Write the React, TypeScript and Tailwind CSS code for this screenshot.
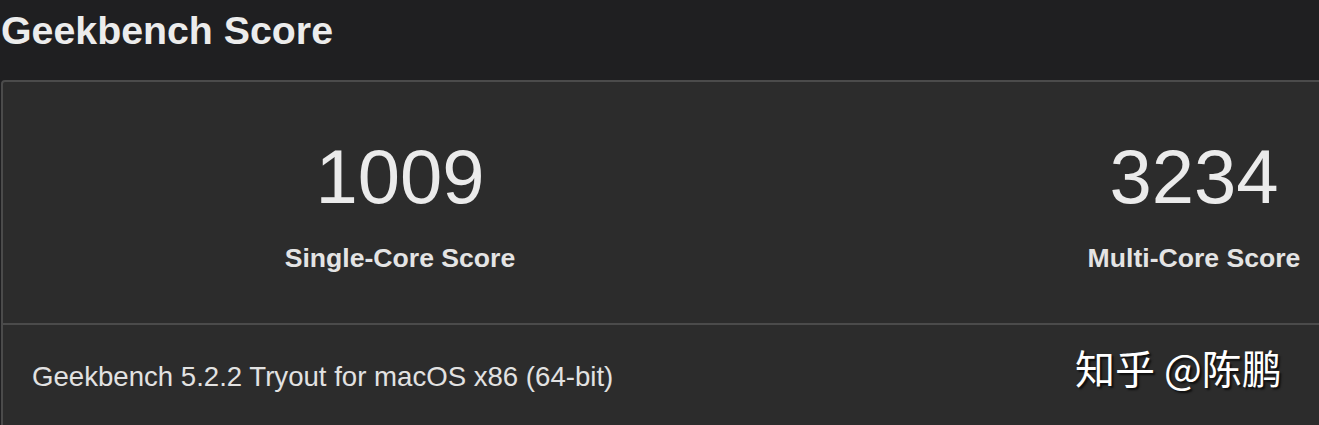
const SCORES = [
  { value: "1009", label: "Single-Core Score" },
  { value: "3234", label: "Multi-Core Score" },
] as const;

export default function App() {
  return (
    <div
      className="relative w-[1319px] h-[425px] overflow-hidden bg-[#1f1f21] text-[#e8e8e8]"
      style={{ fontFamily: '"Liberation Sans", Arial, sans-serif' }}
    >
      {/* Section title */}
      <div className="h-[80px] pt-[11px] pl-px">
        <h1 className="text-[39.3px] font-bold leading-none text-[#ececec]">Geekbench Score</h1>
      </div>

      {/* Score card */}
      <div className="ml-px w-[1592px] h-[400px] rounded-tl-[4px] border-2 border-[#4b4b4b] bg-[#2c2c2c]">
        <div className="grid grid-cols-2 h-[243px] border-b-2 border-[#4b4b4b]">
          {SCORES.map((s) => (
            <div key={s.label} className="flex flex-col items-center pt-[57px]">
              <div className="text-[76px] leading-none font-normal text-[#ebebeb]">{s.value}</div>
              <div className="mt-[30px] text-[26.6px] leading-none font-bold text-[#e4e4e4]">{s.label}</div>
            </div>
          ))}
        </div>
        <div className="pt-[38px] pl-[29px]">
          <p className="text-[27.6px] leading-none text-[#e2e2e2]">
            Geekbench 5.2.2 Tryout for macOS x86 (64-bit)
          </p>
        </div>
      </div>

      {/* Watermark */}
      <div
        className="absolute left-[1075px] top-[347px] text-[40px] leading-none text-white whitespace-nowrap"
        style={{
          fontFamily: '"Noto Sans CJK SC", "Noto Sans", sans-serif',
          textShadow: "2px 2px 2px rgba(0,0,0,0.7)",
        }}
      >
        知乎 @陈鹏
      </div>
    </div>
  );
}
